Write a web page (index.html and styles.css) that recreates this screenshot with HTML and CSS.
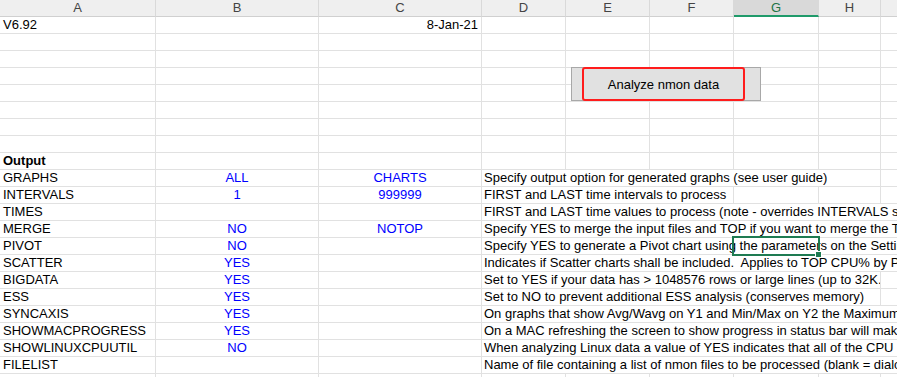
FILE: index.html
```html
<!DOCTYPE html>
<html>
<head>
<meta charset="utf-8">
<link rel="stylesheet" href="styles.css">
</head>
<body>
<div class="wrap">
  <div class="sheet">
    <div class="hd">A</div><div class="hd">B</div><div class="hd">C</div><div class="hd">D</div><div class="hd">E</div><div class="hd">F</div><div class="hd sel">G</div><div class="hd">H</div><div class="hd"></div>

    <div class="c">V6.92</div><div class="c"></div><div class="c r">8-Jan-21</div><div class="c"></div><div class="c"></div><div class="c"></div><div class="c"></div><div class="c"></div><div class="c"></div>

    <div class="c"></div><div class="c"></div><div class="c"></div><div class="c"></div><div class="c"></div><div class="c"></div><div class="c"></div><div class="c"></div><div class="c"></div>
    <div class="c"></div><div class="c"></div><div class="c"></div><div class="c"></div><div class="c"></div><div class="c"></div><div class="c"></div><div class="c"></div><div class="c"></div>
    <div class="c"></div><div class="c"></div><div class="c"></div><div class="c"></div><div class="c"></div><div class="c"></div><div class="c"></div><div class="c"></div><div class="c"></div>
    <div class="c"></div><div class="c"></div><div class="c"></div><div class="c"></div><div class="c"></div><div class="c"></div><div class="c"></div><div class="c"></div><div class="c"></div>
    <div class="c"></div><div class="c"></div><div class="c"></div><div class="c"></div><div class="c"></div><div class="c"></div><div class="c"></div><div class="c"></div><div class="c"></div>
    <div class="c"></div><div class="c"></div><div class="c"></div><div class="c"></div><div class="c"></div><div class="c"></div><div class="c"></div><div class="c"></div><div class="c"></div>
    <div class="c"></div><div class="c"></div><div class="c"></div><div class="c"></div><div class="c"></div><div class="c"></div><div class="c"></div><div class="c"></div><div class="c"></div>

    <div class="c b">Output</div><div class="c"></div><div class="c"></div><div class="c"></div><div class="c"></div><div class="c"></div><div class="c"></div><div class="c"></div><div class="c"></div>

    <div class="c">GRAPHS</div><div class="c v">ALL</div><div class="c v">CHARTS</div><div class="c d to-h">Specify output option for generated graphs (see user guide)</div><div class="c"></div>

    <div class="c">INTERVALS</div><div class="c v">1</div><div class="c v">999999</div><div class="c d to-f">FIRST and LAST time intervals to process</div><div class="c"></div><div class="c"></div><div class="c"></div>

    <div class="c">TIMES</div><div class="c"></div><div class="c"></div><div class="c d to-end">FIRST and LAST time values to process (note - overrides INTERVALS settings)</div>

    <div class="c">MERGE</div><div class="c v">NO</div><div class="c v">NOTOP</div><div class="c d to-end">Specify YES to merge the input files and TOP if you want to merge the TOP sections</div>

    <div class="c">PIVOT</div><div class="c v">NO</div><div class="c"></div><div class="c d to-end">Specify YES to generate a Pivot chart using the parameters on the Settings sheet</div>

    <div class="c">SCATTER</div><div class="c v">YES</div><div class="c"></div><div class="c d to-end">Indicates if Scatter charts shall be included.  Applies to TOP CPU% by PID</div>

    <div class="c">BIGDATA</div><div class="c v">YES</div><div class="c"></div><div class="c d to-h">Set to YES if your data has &gt; 1048576 rows or large lines (up to 32K.)</div><div class="c"></div>

    <div class="c">ESS</div><div class="c v">YES</div><div class="c"></div><div class="c d to-h">Set to NO to prevent additional ESS analysis (conserves memory)</div><div class="c"></div>

    <div class="c">SYNCAXIS</div><div class="c v">YES</div><div class="c"></div><div class="c d to-end">On graphs that show Avg/Wavg on Y1 and Min/Max on Y2 the Maximum will be synced</div>

    <div class="c">SHOWMACPROGRESS</div><div class="c v">YES</div><div class="c"></div><div class="c d to-end">On a MAC refreshing the screen to show progress in status bar will make it slower</div>

    <div class="c">SHOWLINUXCPUUTIL</div><div class="c v">NO</div><div class="c"></div><div class="c d to-end">When analyzing Linux data a value of YES indicates that all of the CPU utilisation is shown</div>

    <div class="c">FILELIST</div><div class="c"></div><div class="c"></div><div class="c d to-end">Name of file containing a list of nmon files to be processed (blank = dialog)</div>

    <div class="c"></div><div class="c"></div><div class="c"></div><div class="c"></div><div class="c"></div><div class="c"></div><div class="c"></div><div class="c"></div><div class="c"></div>
  </div>

  <div class="shape">
    <div class="btn">Analyze nmon data</div>
  </div>

  <div class="selection"><span class="handle"></span></div>
</div>
</body>
</html>
```

FILE: styles.css
```css
html, body {
  margin: 0;
  padding: 0;
  background: #ffffff;
  overflow: hidden;
}

.wrap {
  position: relative;
  width: 897px;
  height: 377px;
  overflow: hidden;
  font-family: "Liberation Sans", Arial, sans-serif;
  font-size: 13px;
  color: #000000;
}

.sheet {
  display: grid;
  grid-template-columns: 156px 163px 163px 84px 84px 84px 85px 62px 120px;
  grid-auto-rows: 17px;
  width: 1001px;
}

.hd {
  box-sizing: border-box;
  background: #efefef;
  border-right: 1px solid #d9d9d9;
  border-bottom: 1px solid #d0d0d0;
  color: #444444;
  font-size: 13px;
  line-height: 16px;
  text-align: center;
}

.hd.sel {
  background: #d9d9d9;
  color: #217346;
  border-bottom: 2px solid #1f9a6a;
  line-height: 15px;
}

.c {
  box-sizing: border-box;
  border-right: 1px solid #e1e1e1;
  border-bottom: 1px solid #e1e1e1;
  display: flex;
  align-items: flex-end;
  line-height: 14px;
  padding: 0 3px 1px 3px;
  white-space: pre;
  overflow: hidden;
  min-width: 0;
}

.c.r {
  justify-content: flex-end;
}

.c.b {
  font-weight: bold;
}

.c.v {
  color: #0000ff;
  justify-content: center;
}

.c.d {
  padding-left: 2px;
}

.to-h {
  grid-column: 4 / 9;
}

.to-f {
  grid-column: 4 / 7;
}

.to-end {
  grid-column: 4 / 10;
}

.shape {
  position: absolute;
  left: 571px;
  top: 67px;
  width: 190px;
  height: 34px;
  box-sizing: border-box;
  background: #e1e1e1;
  border: 1px solid #a8a8a8;
  display: flex;
  padding-left: 10px;
}

.btn {
  box-sizing: border-box;
  margin-top: -1px;
  width: 163px;
  height: 34px;
  border: 2.5px solid #ff1c1c;
  border-radius: 3px;
  display: flex;
  align-items: center;
  justify-content: center;
  font-size: 13px;
  color: #000000;
}

.selection {
  position: absolute;
  left: 732px;
  top: 236px;
  width: 88px;
  height: 20px;
  box-sizing: border-box;
  border: 2px solid #1e7b52;
}

.handle {
  position: absolute;
  right: -4px;
  bottom: -4px;
  width: 5px;
  height: 5px;
  background: #1e7b52;
  border: 1px solid #ffffff;
}
```
